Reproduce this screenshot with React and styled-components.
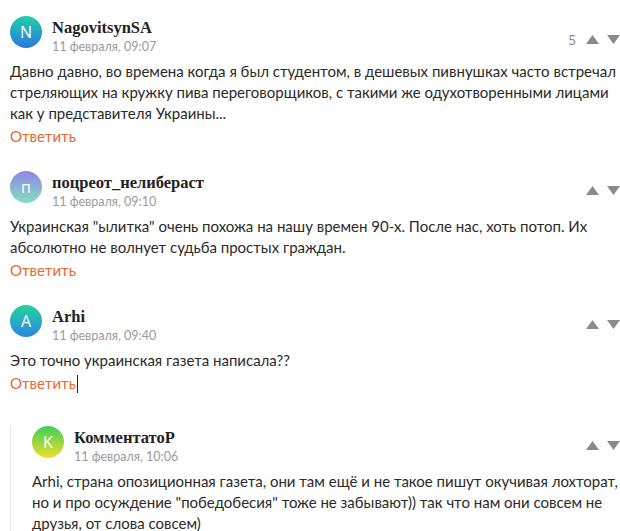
import React from 'react'
import styled, {createGlobalStyle} from 'styled-components'

const GlobalStyle = createGlobalStyle`
  html, body {
    margin: 0;
    padding: 0;
    background: #fff;
  }
  body {
    font-family: Lato, "Open Sans", sans-serif;
    color: #2a2a2a;
  }
`

const comments = [
    {
        id: 1,
        letter: 'N',
        name: 'NagovitsynSA',
        date: '11 февраля, 09:07',
        score: '5',
        colors: ['#1fd0a6', '#2a78e4'],
        text: 'Давно давно, во времена когда я был студентом, в дешевых пивнушках часто встречал стреляющих на кружку пива переговорщиков, с такими же одухотворенными лицами как у представителя Украины...',
    },
    {
        id: 2,
        letter: 'п',
        name: 'поцреот_нелибераст',
        date: '11 февраля, 09:10',
        colors: ['#8f86e6', '#86dcc0'],
        text: 'Украинская "ылитка" очень похожа на нашу времен 90-х. После нас, хоть потоп. Их абсолютно не волнует судьба простых граждан.',
    },
    {
        id: 3,
        letter: 'A',
        name: 'Arhi',
        date: '11 февраля, 09:40',
        colors: ['#22d49a', '#2b86e6'],
        text: 'Это точно украинская газета написала??',
        cursor: true,
    },
]

const reply = {
    id: 4,
    letter: 'K',
    name: 'КомментатоР',
    date: '11 февраля, 10:06',
    colors: ['#3ccf5a', '#f2de2a'],
    text: 'Arhi, страна опозиционная газета, они там ещё и не такое пишут окучивая лохторат, но и про осуждение "победобесия" тоже не забывают)) так что нам они совсем не друзья, от слова совсем)',
}

function Arrow({down}) {
    return (
        <svg width="13" height="9" viewBox="0 0 13 9">
            {down
                ? <polygon points="0,0 13,0 6.5,9" fill="#8a8a8a" />
                : <polygon points="0,9 13,9 6.5,0" fill="#8a8a8a" />}
        </svg>
    )
}

function Comment({c, nested}) {
    return (
        <Item>
            <Header>
                <Avatar from={c.colors[0]} to={c.colors[1]}>{c.letter}</Avatar>
                <Meta>
                    <Name>{c.name}</Name>
                    <Date>{c.date}</Date>
                </Meta>
                <Votes>
                    {c.score && <Score>{c.score}</Score>}
                    <Arrow />
                    <Arrow down />
                </Votes>
            </Header>
            <Body>{c.text}</Body>
            {!nested && (
                <Reply>Ответить{c.cursor && <Caret />}</Reply>
            )}
        </Item>
    )
}

function App() {
    return (
        <Container>
            <GlobalStyle />
            {comments.map((c) => (
                <Comment key={c.id} c={c} />
            ))}
            <Thread>
                <Comment c={reply} nested />
            </Thread>
        </Container>
    )
}

export default App

const Container = styled.div`
    padding: 16px 0 0 10px;
    display: flex;
    flex-direction: column;
    gap: 24px;
`

const Item = styled.div`
    display: flex;
    flex-direction: column;
`

const Header = styled.div`
    display: flex;
    align-items: flex-start;
    gap: 10px;
`

const Avatar = styled.div`
    width: 32px;
    height: 32px;
    border-radius: 50%;
    flex-shrink: 0;
    background: linear-gradient(180deg, ${p => p.from}, ${p => p.to});
    color: #fff;
    font-family: "Open Sans", sans-serif;
    font-size: 16px;
    display: flex;
    align-items: center;
    justify-content: center;
`

const Meta = styled.div`
    display: flex;
    flex-direction: column;
    padding-top: 2px;
    flex: 1;
`

const Name = styled.div`
    font-family: "Liberation Serif", serif;
    font-weight: 700;
    font-size: 16.5px;
    line-height: 20px;
    color: #222;
`

const Date = styled.div`
    font-size: 12.5px;
    line-height: 18px;
    color: #9a9a9a;
`

const Votes = styled.div`
    display: flex;
    align-items: center;
    gap: 8px;
    padding-top: 15px;
    color: #8a8a8a;
    font-size: 14px;
`

const Score = styled.span`
    margin-right: 2px;
`

const Body = styled.div`
    margin-top: 5px;
    font-size: 15px;
    line-height: 21px;
    color: #2a2a2a;
`

const Reply = styled.div`
    margin-top: 2px;
    font-size: 15px;
    line-height: 21px;
    color: #e8692f;
    display: flex;
    align-items: center;
`

const Caret = styled.span`
    display: inline-block;
    width: 1px;
    height: 18px;
    background: #222;
    margin-left: 1px;
`

const Thread = styled.div`
    margin-top: 8px;
    border-left: 1px solid #e4e4e4;
    padding-left: 21px;
`
